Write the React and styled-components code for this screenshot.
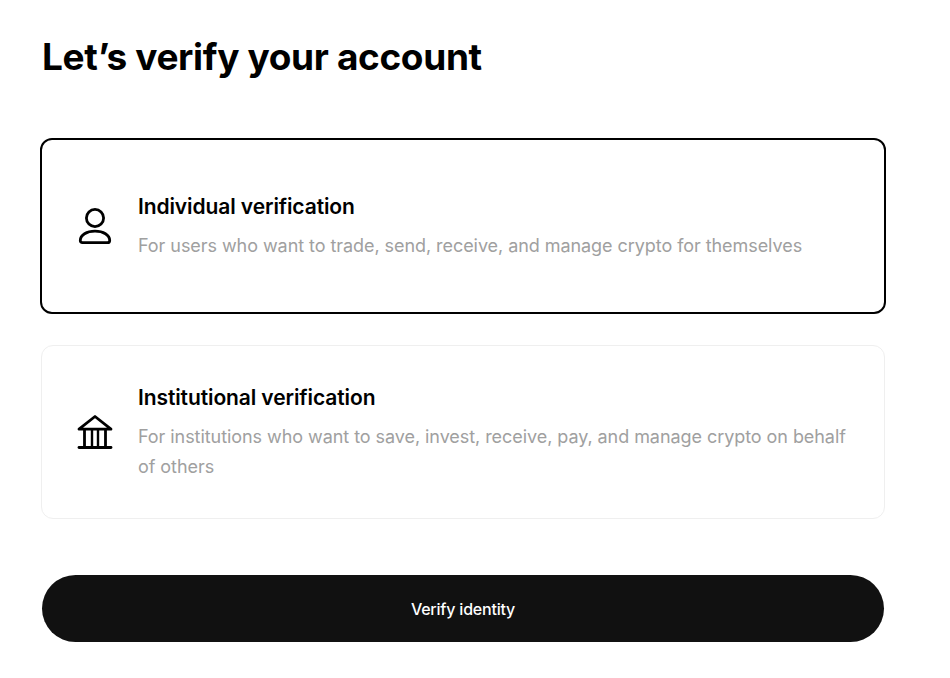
import React, { useState } from "react";
import styled, { createGlobalStyle } from "styled-components";

const GlobalStyle = createGlobalStyle`
  html, body {
    margin: 0;
    padding: 0;
    background: #fff;
    font-family: Inter, "Liberation Sans", sans-serif;
  }
`;

const options = [
  {
    id: "individual",
    title: "Individual verification",
    text: "For users who want to trade, send, receive, and manage crypto for themselves",
    icon: <PersonIcon />,
  },
  {
    id: "institutional",
    title: "Institutional verification",
    text: "For institutions who want to save, invest, receive, pay, and manage crypto on behalf of others",
    icon: <BankIcon />,
  },
];

function PersonIcon() {
  return (
    <svg width="36" height="36" viewBox="0 0 36 36" fill="none" stroke="#000" strokeWidth="2.8">
      <circle cx="18" cy="10" r="8.6" />
      <path d="M5.5 34.6c-1.5 0-2.2-.8-2.2-2.2 0-5.4 6.4-9.3 14.7-9.3s14.7 3.9 14.7 9.3c0 1.4-.7 2.2-2.2 2.2z" strokeLinejoin="round" />
    </svg>
  );
}

function BankIcon() {
  return (
    <svg width="36" height="36" viewBox="0 0 36 36" fill="none" stroke="#000" strokeWidth="2.8" strokeLinecap="round" strokeLinejoin="round">
      <path d="M2 15.2 18 2.5l16 12.7z" />
      <path d="M7.5 16v17M28.5 16v17" strokeLinecap="butt" />
      <path d="M15 16v17M21 16v17" strokeLinecap="butt" strokeWidth="2.4" />
      <path d="M2 33.5h32" />
    </svg>
  );
}

export default function App() {
  const [selected, setSelected] = useState("individual");

  return (
    <Page>
      <GlobalStyle />
      <Heading>Let’s verify your account</Heading>
      <Cards>
        {options.map((it) => (
          <Card key={it.id} $active={selected === it.id} onClick={() => setSelected(it.id)}>
            <IconBox>{it.icon}</IconBox>
            <Body>
              <Title>{it.title}</Title>
              <Text>{it.text}</Text>
            </Body>
          </Card>
        ))}
      </Cards>
      <Button type="button">Verify identity</Button>
    </Page>
  );
}

const Page = styled.div`
  box-sizing: border-box;
  width: 950px;
  height: 678px;
  padding: 32px 65px 0 41px;
  overflow: hidden;
`;

const Heading = styled.h1`
  margin: 0 0 0 1px;
  font-size: 37px;
  line-height: 50px;
  font-weight: 700;
  letter-spacing: -0.35px;
  color: #000;
`;

const Cards = styled.div`
  display: flex;
  flex-direction: column;
  gap: 31px;
  margin-top: 56px;
`;

const Card = styled.div`
  box-sizing: border-box;
  display: flex;
  align-items: center;
  gap: 25px;
  min-height: ${(props) => (props.$active ? "176px" : "174px")};
  padding: 0 30px 0 35px;
  border-radius: 12px;
  border: ${(props) => (props.$active ? "2px solid #000" : "1px solid #efefef")};
  margin: ${(props) => (props.$active ? "0 -1px 0 -1px" : "0")};
  cursor: pointer;
`;

const IconBox = styled.div`
  flex: none;
  display: flex;
  width: 36px;
  height: 36px;
`;

const Body = styled.div`
  display: flex;
  flex-direction: column;
  gap: 9px;
`;

const Title = styled.div`
  font-size: 21px;
  line-height: 30px;
  font-weight: 600;
  letter-spacing: -0.1px;
  color: #000;
`;

const Text = styled.div`
  font-size: 18px;
  line-height: 30px;
  letter-spacing: -0.06px;
  color: #a0a0a0;
`;

const Button = styled.button`
  display: block;
  width: 842px;
  height: 67px;
  margin: 56px 0 0 1px;
  border: 0;
  border-radius: 34px;
  background: #111;
  color: #fff;
  font-family: inherit;
  font-size: 16px;
  font-weight: 500;
  letter-spacing: -0.2px;
  cursor: pointer;
`;
